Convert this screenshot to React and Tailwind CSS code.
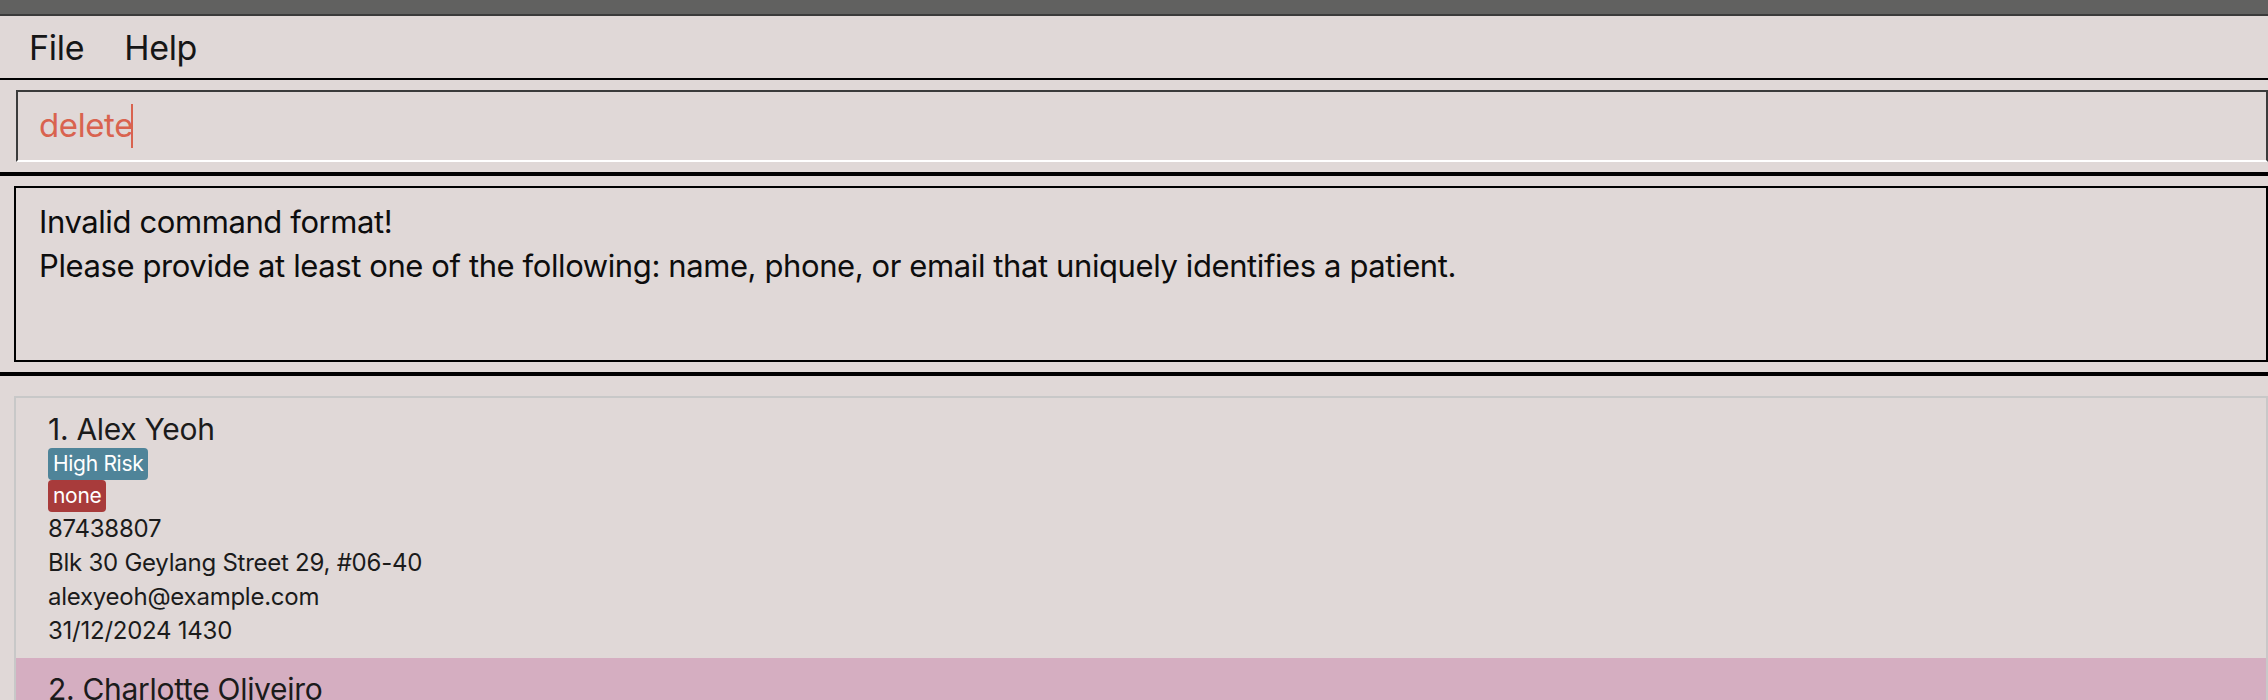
import React from 'react'

const font = { fontFamily: 'Inter, "Noto Sans", sans-serif' }

const patients = [
  {
    id: 1,
    name: 'Alex Yeoh',
    tags: [
      { label: 'High Risk', tone: 'bg-[#4f8499]' },
      { label: 'none', tone: 'bg-[#a83b3b]' },
    ],
    phone: '87438807',
    address: 'Blk 30 Geylang Street 29, #06-40',
    email: 'alexyeoh@example.com',
    appointment: '31/12/2024 1430',
  },
  {
    id: 2,
    name: 'Charlotte Oliveiro',
    tags: [
      { label: 'Low Risk', tone: 'bg-[#4f8499]' },
      { label: 'none', tone: 'bg-[#a83b3b]' },
    ],
    phone: '93210283',
    address: 'Blk 30 Lorong 3 Serangoon Gardens, #07-18',
    email: 'charlotte@example.com',
    appointment: '01/01/2025 0900',
  },
]

function PatientCard({ index, patient, selected }) {
  return (
    <div className={selected ? 'bg-[#d5aec1] pl-[32px] pt-[12px] pb-[10px]' : 'bg-[#e0d8d7] pl-[32px] pt-[12px] pb-[10px]'}>
      <div className="text-[30px] leading-[38px] text-[#1b1b1b] tracking-[-0.3px]">
        {index}. {patient.name}
      </div>
      <div className="flex flex-col items-start">
        {patient.tags.map((t) => (
          <span
            key={t.label}
            className={`${t.tone} text-white text-[21px] leading-[32px] px-[5px] rounded-[4px] tracking-[-0.3px]`}
          >
            {t.label}
          </span>
        ))}
      </div>
      <div className="text-[24px] leading-[34px] text-[#1b1b1b] tracking-[-0.25px]">
        <div>{patient.phone}</div>
        <div>{patient.address}</div>
        <div>{patient.email}</div>
        <div>{patient.appointment}</div>
      </div>
    </div>
  )
}

export default function App() {
  return (
    <div className="w-[2268px] h-[700px] overflow-hidden bg-[#e0d8d7] flex flex-col" style={font}>
      <div className="h-[14px] bg-[#616160] shrink-0" />
      <div className="h-[2px] bg-[#3a3a3a] shrink-0" />

      <div className="h-[62px] flex items-center gap-[40px] pl-[29px] text-[34px] text-[#161616] shrink-0 tracking-[-0.3px]">
        <span>File</span>
        <span>Help</span>
      </div>
      <div className="h-[2px] bg-black shrink-0" />

      <div className="h-[92px] pt-[10px] pl-[16px] shrink-0">
        <div className="h-[72px] border-t-2 border-l-2 border-r-2 border-b-2 border-t-[#3b3b3b] border-l-[#3b3b3b] border-r-[#3b3b3b] border-b-white flex items-center pl-[21px]">
          <span className="text-[33px] text-[#d9634f] tracking-[-0.4px]">delete</span>
          <span className="w-[2px] h-[44px] bg-[#d9634f] -ml-[2px]" />
        </div>
      </div>
      <div className="h-[4px] bg-black shrink-0" />

      <div className="h-[196px] pt-[10px] pl-[14px] shrink-0">
        <div className="h-[176px] border-2 border-black pl-[23px] pt-[12px] text-[31px] leading-[44px] text-[#0d0d0d] tracking-[-0.4px]">
          <div>Invalid command format!</div>
          <div>Please provide at least one of the following: name, phone, or email that uniquely identifies a patient.</div>
        </div>
      </div>
      <div className="h-[4px] bg-black shrink-0" />

      <div className="flex-1 pt-[20px] pl-[14px] min-h-0">
        <div className="h-full border-t-2 border-l-2 border-r-2 border-[#c8c8c8] overflow-hidden">
          {patients.map((p, i) => (
            <PatientCard key={p.id} index={i + 1} patient={p} selected={i === 1} />
          ))}
        </div>
      </div>
    </div>
  )
}
